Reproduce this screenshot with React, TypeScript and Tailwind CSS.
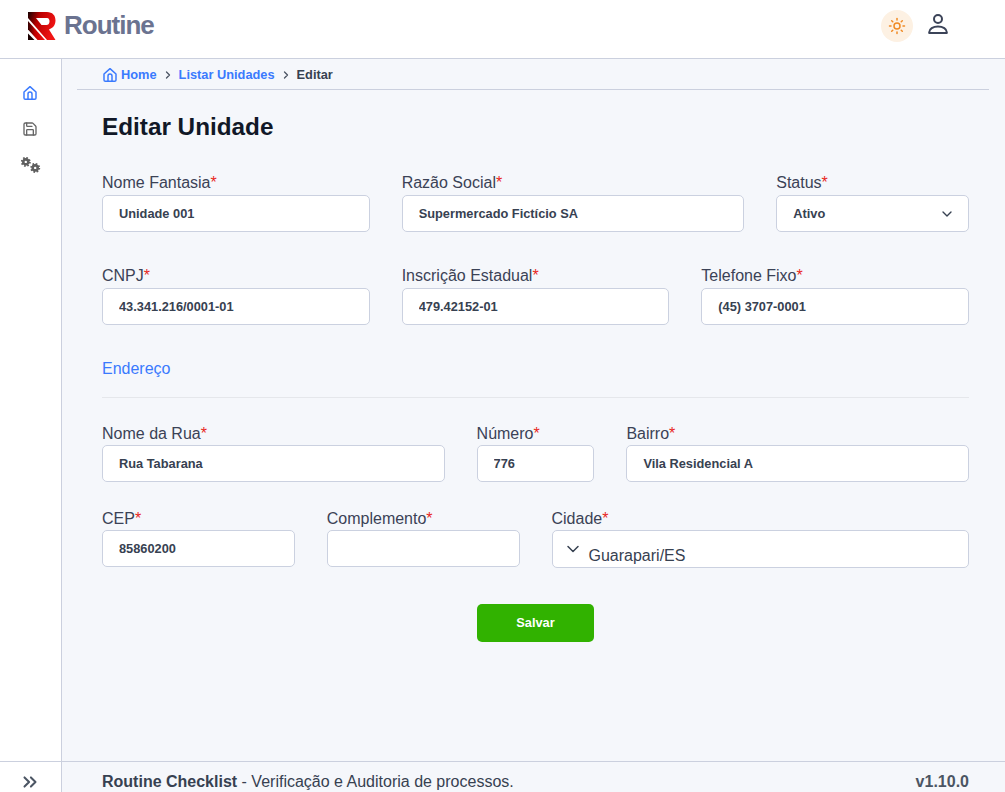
import { ChevronDown, ChevronRight, ChevronsRight, Save, Sun } from "lucide-react";

const font = "font-['Liberation_Sans',Arial,sans-serif]";

function Logo() {
  return (
    <svg width="28" height="28" viewBox="0 0 28 28">
      <defs>
        <linearGradient id="logo-top" x1="0" y1="0" x2="1" y2="0.35">
          <stop offset="0" stopColor="#140000" />
          <stop offset="0.4" stopColor="#b80000" />
          <stop offset="1" stopColor="#f01414" />
        </linearGradient>
        <linearGradient id="logo-low" x1="0" y1="0" x2="1" y2="0">
          <stop offset="0" stopColor="#300000" />
          <stop offset="0.4" stopColor="#c00000" />
          <stop offset="1" stopColor="#f01010" />
        </linearGradient>
      </defs>
      <path
        fillRule="evenodd"
        d="M0 0H19C24.500 0 27.500 3.500 27.500 8.500C27.500 13 25 16 21 17.500L27.500 28H19L0 6ZM8 6H19C21 6 21.500 8 21.500 9.500C21.500 12 20 13 18.500 13H13.500Z"
        fill="url(#logo-top)"
      />
      <path d="M0 9L17 28H9.500L0 17.500Z" fill="url(#logo-low)" />
      <path d="M0 21.500L6.500 28H0Z" fill="#1a0000" />
    </svg>
  );
}

function HomeIcon({ size }: { size: number }) {
  return (
    <svg width={size} height={size} viewBox="0 0 24 24" fill="none" stroke="#3a7afe" strokeWidth="2.2" strokeLinejoin="round">
      <path d="M3 10.500L12 2.500L21 10.500V19.500A2 2 0 0 1 19 21.500H5A2 2 0 0 1 3 19.500Z" />
      <path d="M9 21.500V13.500A3 3 0 0 1 15 13.500V21.500" />
    </svg>
  );
}

function UserIcon() {
  return (
    <svg width="20" height="20" viewBox="0 0 20 20" fill="none" stroke="#3b4358" strokeWidth="2" strokeLinejoin="round">
      <circle cx="10" cy="5" r="4" />
      <path d="M1.200 19V18.300C1.200 15 5 12.500 10 12.500C15 12.500 18.800 15 18.800 18.300V19Z" />
    </svg>
  );
}

function Gears() {
  return (
    <svg width="20" height="16" viewBox="0 0 20 16" fill="none" stroke="#5f5f5f">
      <circle cx="4.800" cy="4.900" r="2.500" strokeWidth="2.600" />
      <circle cx="4.800" cy="4.900" r="4" strokeWidth="2" strokeDasharray="1.570 1.570" />
      <circle cx="14.200" cy="10.900" r="2.500" strokeWidth="2.600" />
      <circle cx="14.200" cy="10.900" r="4" strokeWidth="2" strokeDasharray="1.570 1.570" />
    </svg>
  );
}

function Label({ text, compact }: { text: string; compact?: boolean }) {
  return (
    <label className={`block text-base leading-[18px] text-[#3b4256] ${compact ? "h-[20px]" : "h-[21px]"}`}>
      {text}
      <span className="text-[#e8281e]">*</span>
    </label>
  );
}

function Field({ label, value, span, compact }: { label: string; value?: string; span: string; compact?: boolean }) {
  return (
    <div className={span}>
      <Label text={label} compact={compact} />
      <input
        readOnly
        value={value ?? ""}
        className="block h-[37px] w-full rounded-[5px] border border-[#cbd1e0] bg-white px-4 text-[12.8px] font-bold text-[#374151] outline-none"
      />
    </div>
  );
}

export default function App() {
  return (
    <div className={`flex h-screen flex-col overflow-hidden bg-white ${font}`}>
      <header className="flex h-[59px] shrink-0 border-b border-[#cbd0de] bg-white">
        <div className="flex h-[52px] items-center pl-7">
          <Logo />
          <span className="ml-[8px] -mt-[2px] text-[26px] font-bold tracking-[-1px] text-[#6b7390]">Routine</span>
        </div>
        <div className="ml-auto flex items-start pr-[57px] pt-[10px]">
          <button className="flex h-8 w-8 items-center justify-center rounded-full bg-[#fdf1e3]">
            <Sun size={18} className="text-[#f08a24]" />
          </button>
          <div className="ml-[15px] pt-[4px]">
            <UserIcon />
          </div>
        </div>
      </header>

      <div className="flex min-h-0 flex-1">
        <aside className="flex w-[62px] shrink-0 flex-col items-center border-r border-[#cbd0de] bg-white pt-[26px] pr-[1px]">
          <HomeIcon size={16} />
          <Save size={16} className="mt-[20px] text-[#666666]" />
          <div className="mt-[20px] pl-[1px]">
            <Gears />
          </div>
        </aside>

        <main className="min-w-0 flex-1 bg-[#f5f7fb] pl-[15px] pr-[16px]">
          <nav className="flex h-[31px] items-center border-b border-[#cbd0de] pl-[25px] pt-[1px] text-[12.8px] font-bold">
            <HomeIcon size={16} />
            <a className="ml-[3px] text-[#3a7afe]">Home</a>
            <ChevronRight size={12} strokeWidth={2.6} className="mx-[5px] text-[#4b5563]" />
            <a className="text-[#3a7afe]">Listar Unidades</a>
            <ChevronRight size={12} strokeWidth={2.6} className="mx-[5px] text-[#4b5563]" />
            <span className="text-[#374151]">Editar</span>
          </nav>

          <div className="pl-[25px] pr-[20px]">
            <h1 className="mt-[21px] text-[24.3px] leading-[32px] font-bold text-[#111827]">Editar Unidade</h1>

            <form className="mt-[31px]">
              <div className="grid grid-cols-12 gap-x-8">
                <Field span="col-span-4" label="Nome Fantasia" value="Unidade 001" />
                <Field span="col-span-5" label="Razão Social" value="Supermercado Fictício SA" />
                <div className="col-span-3">
                  <Label text="Status" />
                  <div className="flex h-[37px] items-center justify-between rounded-[5px] border border-[#cbd1e0] bg-white pl-4 pr-[13px] text-[12.8px] font-bold text-[#374151]">
                    Ativo
                    <ChevronDown size={16} className="text-[#374151]" />
                  </div>
                </div>
              </div>

              <div className="mt-[35px] grid grid-cols-12 gap-x-8">
                <Field span="col-span-4" label="CNPJ" value="43.341.216/0001-01" />
                <Field span="col-span-4" label="Inscrição Estadual" value="479.42152-01" />
                <Field span="col-span-4" label="Telefone Fixo" value="(45) 3707-0001" />
              </div>

              <h2 className="mt-[35px] text-base leading-[18px] text-[#3a7afe]">Endereço</h2>
              <hr className="mt-[19px] border-[#e5e7eb]" />

              <div className="mt-[27px] grid grid-cols-12 gap-x-8">
                <Field compact span="col-span-5" label="Nome da Rua" value="Rua Tabarana" />
                <Field compact span="col-span-2" label="Número" value="776" />
                <Field compact span="col-span-5" label="Bairro" value="Vila Residencial A" />
              </div>

              <div className="mt-[28px] grid grid-cols-12 gap-x-8">
                <Field compact span="col-span-3" label="CEP" value="85860200" />
                <Field compact span="col-span-3" label="Complemento" />
                <div className="col-span-6">
                  <Label text="Cidade" compact />
                  <div className="flex h-[38px] rounded-[5px] border border-[#cbd1e0] bg-white pl-[10px]">
                    <ChevronDown size={20} strokeWidth={1.8} className="mt-[8px] text-[#374151]" />
                    <span className="ml-[6px] mt-[16px] text-base leading-[18px] text-[#374151]">Guarapari/ES</span>
                  </div>
                </div>
              </div>

              <div className="mt-[36px] flex justify-center">
                <button type="button" className="h-[38px] w-[117px] rounded-[5px] bg-[#31b200] text-[12.8px] font-bold text-white">
                  Salvar
                </button>
              </div>
            </form>
          </div>
        </main>
      </div>

      <footer className="flex h-[31px] shrink-0 border-t border-[#cbd0de] bg-[#f5f7fb]">
        <div className="flex w-[62px] shrink-0 justify-center border-r border-[#cbd0de] bg-white pt-[9px] pr-[2px]">
          <ChevronsRight size={22} strokeWidth={2.2} className="text-[#4b5563]" />
        </div>
        <div className="flex flex-1 items-start justify-between pl-[40px] pr-[36px] pt-[11px] text-base leading-[18px] text-[#374151]">
          <p>
            <strong>Routine Checklist</strong> - Verificação e Auditoria de processos.
          </p>
          <span className="font-bold text-[#4b5563]">v1.10.0</span>
        </div>
      </footer>
    </div>
  );
}
